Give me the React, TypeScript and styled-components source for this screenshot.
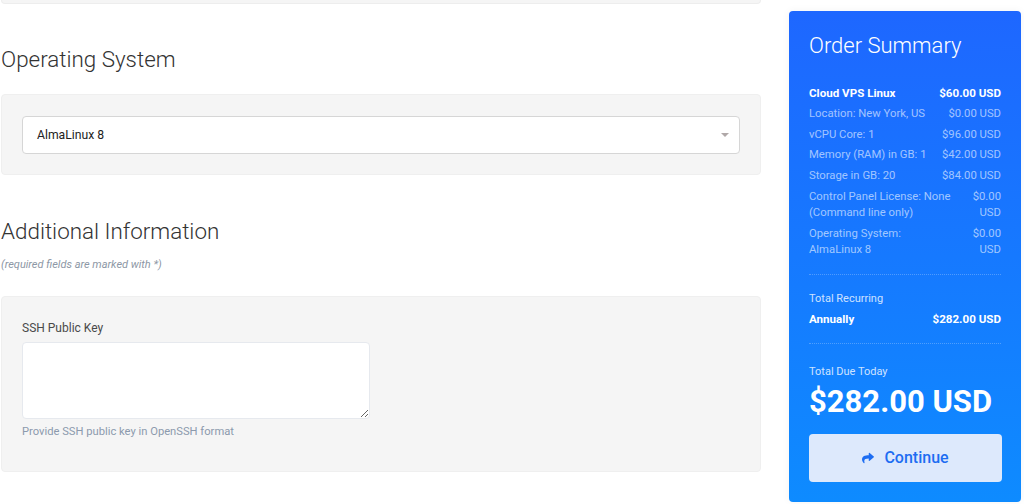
import React from "react"
import styled, { createGlobalStyle } from "styled-components"
import { FaShare } from "react-icons/fa"

const GlobalStyle = createGlobalStyle`
  html, body {
    margin: 0;
    padding: 0;
    background: #fff;
    font-family: Roboto, "Liberation Sans", sans-serif;
    color: #333;
  }
  * { box-sizing: border-box; }
`

const lines = [
  { label: "Location: New York, US", price: "$0.00 USD" },
  { label: "vCPU Core: 1", price: "$96.00 USD" },
  { label: "Memory (RAM) in GB: 1", price: "$42.00 USD" },
  { label: "Storage in GB: 20", price: "$84.00 USD" },
  { label: "Control Panel License: None (Command line only)", price: "$0.00 USD" },
  { label: "Operating System: AlmaLinux 8", price: "$0.00 USD" },
]

const App = () => {
  return (
    <Page>
      <GlobalStyle />
      <Main>
        <PrevCard />
        <SectionTitle>Operating System</SectionTitle>
        <Card $top={21} $pad="21px 20px 20px">
          <Select>
            <span>AlmaLinux 8</span>
            <Caret />
          </Select>
        </Card>
        <SectionTitle $top={42}>Additional Information</SectionTitle>
        <Hint>(required fields are marked with *)</Hint>
        <Card $top={25} $pad="23px 20px 31px">
          <Label>SSH Public Key</Label>
          <TextArea />
          <Help>Provide SSH public key in OpenSSH format</Help>
        </Card>
      </Main>
      <Summary>
        <SummaryTitle>Order Summary</SummaryTitle>
        <Lines>
          <Line $strong>
            <span>Cloud VPS Linux</span>
            <Price>$60.00 USD</Price>
          </Line>
          {lines.map((l) => (
            <Line key={l.label}>
              <span>{l.label}</span>
              <Price>{l.price}</Price>
            </Line>
          ))}
        </Lines>
        <Divider />
        <SmallLabel>Total Recurring</SmallLabel>
        <Line $strong>
          <span>Annually</span>
          <Price>$282.00 USD</Price>
        </Line>
        <Divider $bottom={20} />
        <SmallLabel>Total Due Today</SmallLabel>
        <Total>$282.00 USD</Total>
        <ContinueButton>
          <FaShare size={12} />
          Continue
        </ContinueButton>
      </Summary>
    </Page>
  )
}

const Page = styled.div`
  display: grid;
  grid-template-columns: 761px 232px;
  column-gap: 28px;
  width: 1024px;
  height: 504px;
  overflow: hidden;
  align-items: start;
`

const Main = styled.div`
  display: flex;
  flex-direction: column;
`

const PrevCard = styled.div`
  height: 4px;
  margin-left: 1px;
  background: #f5f5f5;
  border: 1px solid #ededed;
  border-top: none;
  border-radius: 0 0 4px 4px;
`

const SectionTitle = styled.h2<{ $top?: number }>`
  margin: ${(p) => p.$top ?? 41}px 0 0 1px;
  font-size: 22.4px;
  font-weight: 300;
  line-height: 28px;
  color: #333;
`

const Card = styled.div<{ $top: number; $pad: string }>`
  margin: ${(p) => p.$top}px 0 0 1px;
  padding: ${(p) => p.$pad};
  background: #f5f5f5;
  border: 1px solid #efefef;
  border-radius: 4px;
`

const Select = styled.div`
  display: flex;
  align-items: center;
  justify-content: space-between;
  height: 38px;
  padding: 0 10px 0 14px;
  background: #fff;
  border: 1px solid #d6d6d6;
  border-radius: 4px;
  font-size: 12.2px;
  color: #222;
`

const Caret = styled.span`
  width: 0;
  height: 0;
  border-left: 4px solid transparent;
  border-right: 4px solid transparent;
  border-top: 4px solid #b0a8a8;
`

const Hint = styled.div`
  margin-top: 13px;
  margin-left: 1px;
  font-size: 11px;
  font-style: italic;
  color: #8d97a5;
`

const Label = styled.div`
  font-size: 12px;
  color: #4a4a4a;
  line-height: 16px;
`

const TextArea = styled.textarea`
  display: block;
  width: 348px;
  height: 77px;
  margin-top: 6px;
  border: 1px solid #e6e9ee;
  border-radius: 4px;
  background: #fff;
  resize: vertical;
  outline: none;
`

const Help = styled.div`
  margin-top: 5px;
  font-size: 11.2px;
  color: #8c9aad;
  line-height: 16px;
`

const Summary = styled.aside`
  margin-top: 11px;
  height: 491px;
  padding: 20px 20px 0;
  border-radius: 4px;
  background: linear-gradient(180deg, #1e67ff 0%, #0e8bff 100%);
  box-shadow: 0 0 8px rgba(0, 0, 0, 0.05);
  color: #fff;
  display: flex;
  flex-direction: column;
`

const SummaryTitle = styled.h3`
  margin: 0;
  font-size: 22px;
  font-weight: 300;
  line-height: 30px;
`

const Lines = styled.div`
  display: flex;
  flex-direction: column;
  gap: 4.75px;
  margin-top: 24px;
`

const Line = styled.div<{ $strong?: boolean }>`
  display: flex;
  justify-content: space-between;
  gap: 8px;
  font-size: ${(p) => (p.$strong ? "11.6px" : "11.3px")};
  line-height: 16px;
  font-weight: ${(p) => (p.$strong ? 700 : 400)};
  color: ${(p) => (p.$strong ? "#fff" : "rgba(255, 255, 255, 0.6)")};

  & > span {
    flex: 0 1 auto;
  }
`

const Price = styled.span`
  text-align: right;
`

const Divider = styled.div<{ $bottom?: number }>`
  margin: 16px 0 ${(p) => p.$bottom ?? 16}px;
  border-top: 1px dotted rgba(255, 255, 255, 0.25);
`

const SmallLabel = styled.div`
  margin-bottom: 4px;
  font-size: 11px;
  line-height: 16px;
  color: rgba(255, 255, 255, 0.8);
`

const Total = styled.div`
  font-size: 31px;
  font-weight: 700;
  line-height: 34px;
  margin-top: 1px;
`

const ContinueButton = styled.button`
  margin-top: 15px;
  height: 48px;
  width: 193px;
  display: flex;
  align-items: center;
  justify-content: center;
  gap: 10px;
  border: none;
  border-radius: 4px;
  background: #dde9fc;
  color: #1d6df2;
  font-family: Roboto, "Liberation Sans", sans-serif;
  font-size: 16px;
  font-weight: 500;
  cursor: pointer;
`

export default App
